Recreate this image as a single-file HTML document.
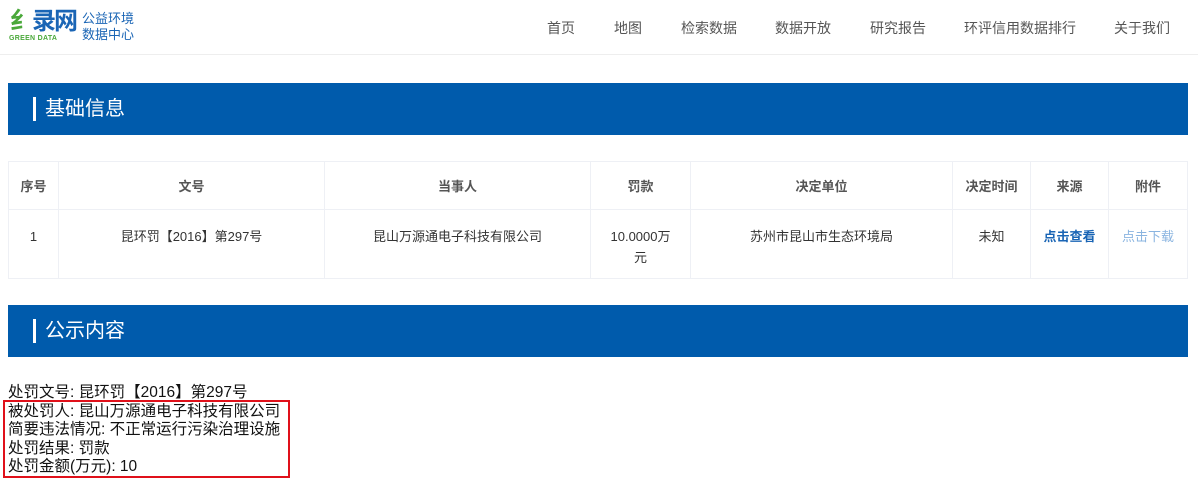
<!DOCTYPE html>
<html><head><meta charset="utf-8"><style>
*{margin:0;padding:0;box-sizing:border-box}
body{width:1198px;height:486px;background:#fff;font-family:"Liberation Sans","Noto Sans CJK SC",sans-serif;position:relative;overflow:hidden}
.hdr{position:absolute;left:0;top:0;width:1198px;height:55px;border-bottom:1px solid #eee}
.nav span{position:absolute;top:18px;font-size:14px;color:#555}
.ban{position:absolute;left:8px;width:1180px;height:52px;background:#005bac;color:#fff;font-size:20px;line-height:52px;padding-left:37px}
.ban:before{content:"";position:absolute;left:25px;top:14px;width:3px;height:24px;background:#fff}
table{position:absolute;left:8px;top:161px;width:1180px;border-collapse:collapse;font-size:13px;color:#333}
td,th{border:1px solid #eef0f5;text-align:center;vertical-align:top}
th{height:48px;vertical-align:middle;font-weight:bold;color:#555}
td{height:69px;padding-top:16px;line-height:21px}
.txt{position:absolute;left:8px;top:384px;font-size:15.5px;line-height:18.5px;color:#111;white-space:nowrap}
.box{position:absolute;left:3px;top:400px;width:287px;height:78px;border:2px solid #e0101a}
</style></head><body>
<div class="hdr">
<div style="position:absolute;left:10px;top:9px;font-size:24px;font-weight:bold;color:#1a65b5;line-height:26px;letter-spacing:-2px"><span style="color:#4aa83a">纟</span>录网</div>
<div style="position:absolute;left:9px;top:35px;font-size:7px;font-weight:bold;color:#4aa83a;letter-spacing:0.3px">GREEN DATA</div>
<div style="position:absolute;left:82px;top:11px;font-size:13px;line-height:16px;color:#1a65b5">公益环境<br>数据中心</div>
<div class="nav">
<span style="left:547px">首页</span><span style="left:614px">地图</span><span style="left:681px">检索数据</span><span style="left:775px">数据开放</span><span style="left:870px">研究报告</span><span style="left:964px">环评信用数据排行</span><span style="left:1114px">关于我们</span>
</div></div>
<div class="ban" style="top:83px">基础信息</div>
<table>
<tr><th style="width:50px">序号</th><th style="width:266px">文号</th><th style="width:266px">当事人</th><th style="width:100px">罚款</th><th style="width:262px">决定单位</th><th style="width:78px">决定时间</th><th style="width:78px">来源</th><th>附件</th></tr>
<tr><td>1</td><td>昆环罚【2016】第297号</td><td>昆山万源通电子科技有限公司</td><td>10.0000万<br>元</td><td>苏州市昆山市生态环境局</td><td>未知</td><td style="color:#1a65b5;font-weight:bold">点击查看</td><td style="color:#8ab4e0">点击下载</td></tr>
</table>
<div class="ban" style="top:305px">公示内容</div>
<div class="txt">处罚文号: 昆环罚【2016】第297号<br>被处罚人: 昆山万源通电子科技有限公司<br>简要违法情况: 不正常运行污染治理设施<br>处罚结果: 罚款<br>处罚金额(万元): 10</div>
<div class="box"></div>
</body></html>
